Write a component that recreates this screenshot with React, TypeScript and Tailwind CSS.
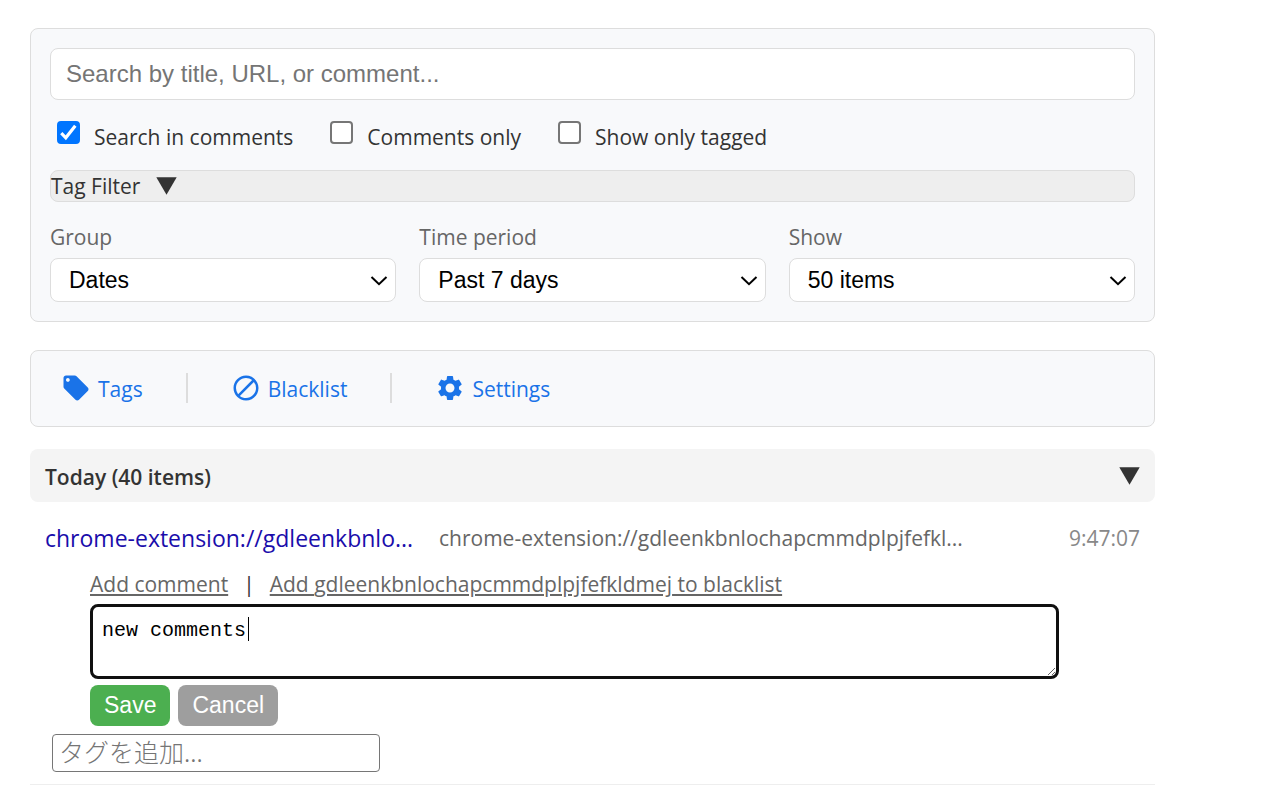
import { useState } from 'react';
import { MdBlock, MdLocalOffer, MdSettings } from 'react-icons/md';

const EXTENSION_ID = 'gdleenkbnlochapcmmdplpjfefkldmej';

function App() {
  return (
    <div className="min-h-screen bg-white font-['Open_Sans',sans-serif] text-[21px] leading-8 text-[#333333]">
      <main className="w-full max-w-[1185px] px-[30px] pt-7">
        <SearchPanel />
        <Toolbar />
        <HistoryGroup />
      </main>
    </div>
  );
}

function SearchPanel() {
  return (
    <section className="rounded-lg border border-[#dddddd] bg-[#f8f9fb] p-[19px]">
      <input
        type="text"
        aria-label="Search history"
        placeholder="Search by title, URL, or comment..."
        className="block h-[52px] w-full rounded-lg border border-[#dddddd] bg-white px-[15px] font-['Liberation_Sans',sans-serif] text-2xl text-black placeholder:text-[#757575] outline-none"
      />

      <div className="mt-[21px] flex h-[33px] gap-[37px] pl-[7px]">
        <CheckOption id="in-comments" label="Search in comments" initial={true} />
        <CheckOption id="comments-only" label="Comments only" initial={false} />
        <CheckOption id="only-tagged" label="Show only tagged" initial={false} />
      </div>

      <button
        type="button"
        className="mt-4 flex h-8 w-full items-center gap-4 rounded-lg border border-[#dddddd] bg-[#eeeeee] text-left"
      >
        <span>Tag Filter</span>
        <Triangle />
      </button>

      <div className="mt-[19px] grid grid-cols-3 gap-[23px]">
        <SelectField id="group" label="Group" options={['Dates', 'Domains']} />
        <SelectField id="period" label="Time period" options={['Past 7 days', 'Past 30 days']} />
        <SelectField id="show" label="Show" options={['50 items', '100 items']} />
      </div>
    </section>
  );
}

function Triangle() {
  return (
    <svg viewBox="0 0 21 18" className="h-[18px] w-[21px]" aria-hidden="true">
      <path d="M.3.3h20.4L10.5 17.8z" fill="#333333" />
    </svg>
  );
}

function CheckOption({ id, label, initial }: { id: string; label: string; initial: boolean }) {
  const [checked, setChecked] = useState(initial);

  return (
    <div className="flex items-start gap-[14px]">
      <span className="grid size-[23px]">
        <input
          id={id}
          type="checkbox"
          checked={checked}
          onChange={() => setChecked(!checked)}
          className="col-start-1 row-start-1 size-[23px] appearance-none rounded-[4px] border-2 border-[#767676] bg-white checked:border-[#0075ff] checked:bg-[#0075ff]"
        />
        {checked && (
          <svg viewBox="0 0 23 23" className="pointer-events-none col-start-1 row-start-1 size-[23px]">
            <path d="M4.3 12.2 8.8 16.8 18.3 4.8" fill="none" stroke="#ffffff" strokeWidth="3.2" />
          </svg>
        )}
      </span>
      <label htmlFor={id}>{label}</label>
    </div>
  );
}

function SelectField({ id, label, options }: { id: string; label: string; options: string[] }) {
  return (
    <div>
      <label htmlFor={id} className="block text-[#666666]">{label}</label>
      <div className="relative mt-[5px]">
        <select
          id={id}
          className="block h-11 w-full appearance-none rounded-lg border border-[#dddddd] bg-white pl-[18px] pr-10 font-['Liberation_Sans',sans-serif] text-[23px] text-black"
        >
          {options.map((option) => (
            <option key={option}>{option}</option>
          ))}
        </select>
        <svg viewBox="0 0 18 10" className="pointer-events-none absolute right-2 top-[18px] h-[10px] w-[18px]">
          <path d="M1.5 1 9 8.2 16.5 1" fill="none" stroke="#000000" strokeWidth="2" />
        </svg>
      </div>
    </div>
  );
}

function Toolbar() {
  const links = [
    { label: 'Tags', icon: MdLocalOffer },
    { label: 'Blacklist', icon: MdBlock },
    { label: 'Settings', icon: MdSettings }
  ];

  return (
    <nav className="mt-7 flex h-[77px] items-center rounded-lg border border-[#dddddd] bg-[#f8f9fb] px-[30px] pb-[2px]">
      {links.map((link, index) => (
        <div key={link.label} className="flex items-center">
          {index > 0 && <span className="mx-[43px] h-[30px] w-[2px] bg-[#dddddd]" />}
          <a href="#" className="flex items-center gap-[7px] text-[#1a73e8]">
            <link.icon size={30} />
            <span className="pt-[2px]">{link.label}</span>
          </a>
        </div>
      ))}
    </nav>
  );
}

function HistoryGroup() {
  return (
    <section className="mt-[22px]">
      <button
        type="button"
        className="flex h-[53px] w-full items-center justify-between rounded-lg bg-[#f4f4f4] px-[15px]"
      >
        <span className="pt-[2px] font-semibold">Today (40 items)</span>
        <Triangle />
      </button>
      <HistoryItem />
    </section>
  );
}

function HistoryItem() {
  const [comment, setComment] = useState('new comments');

  return (
    <article className="border-b border-[#eeeeee] pb-3 pt-5">
      <div className="flex items-center px-[15px]">
        <a href="#" className="w-[394px] shrink-0 whitespace-nowrap text-[23px] text-[#1a0dab]">
          chrome-extension://gdleenkbnlo...
        </a>
        <span className="flex-1 whitespace-nowrap text-[#666666]">
          chrome-extension://gdleenkbnlochapcmmdplpjfefkl...
        </span>
        <time className="text-[#888888]">9:47:07</time>
      </div>

      <div className="mt-[14px] pl-[60px] pr-[96px]">
        <div className="flex gap-[15px] whitespace-nowrap">
          <a href="#" className="text-[#666666] underline">Add comment</a>
          <span>|</span>
          <a href="#" className="text-[#666666] underline">Add {EXTENSION_ID} to blacklist</a>
        </div>

        <div className="relative mt-1">
          <textarea
            aria-label="Comment"
            value={comment}
            onChange={(event) => setComment(event.target.value)}
            className="block h-[75px] w-full resize rounded-lg border-[3px] border-[#101010] bg-white px-[9px] py-[9px] font-['Liberation_Mono',monospace] text-xl leading-[30px] text-black caret-transparent outline-none"
          />
          <span className="pointer-events-none absolute left-[158px] top-[13px] h-6 w-px bg-black" />
        </div>

        <div className="mt-[6px] flex gap-2 font-['Liberation_Sans',sans-serif] text-[23px] text-white">
          <button type="button" className="h-[41px] rounded-lg bg-[#4caf50] px-[14px] pb-[2px]">Save</button>
          <button type="button" className="h-[41px] rounded-lg bg-[#9e9e9e] px-[14px] pb-[2px]">Cancel</button>
        </div>
      </div>

      <input
        type="text"
        aria-label="タグを追加"
        placeholder="タグを追加..."
        className="ml-[22px] mt-2 block h-[38px] w-[328px] rounded-[4px] border border-[#767676] bg-white px-[6px] pb-[5px] font-['Noto_Sans_CJK_JP',sans-serif] text-[25px] font-light text-black placeholder:text-[#757575] outline-none"
      />
    </article>
  );
}

export default App;
